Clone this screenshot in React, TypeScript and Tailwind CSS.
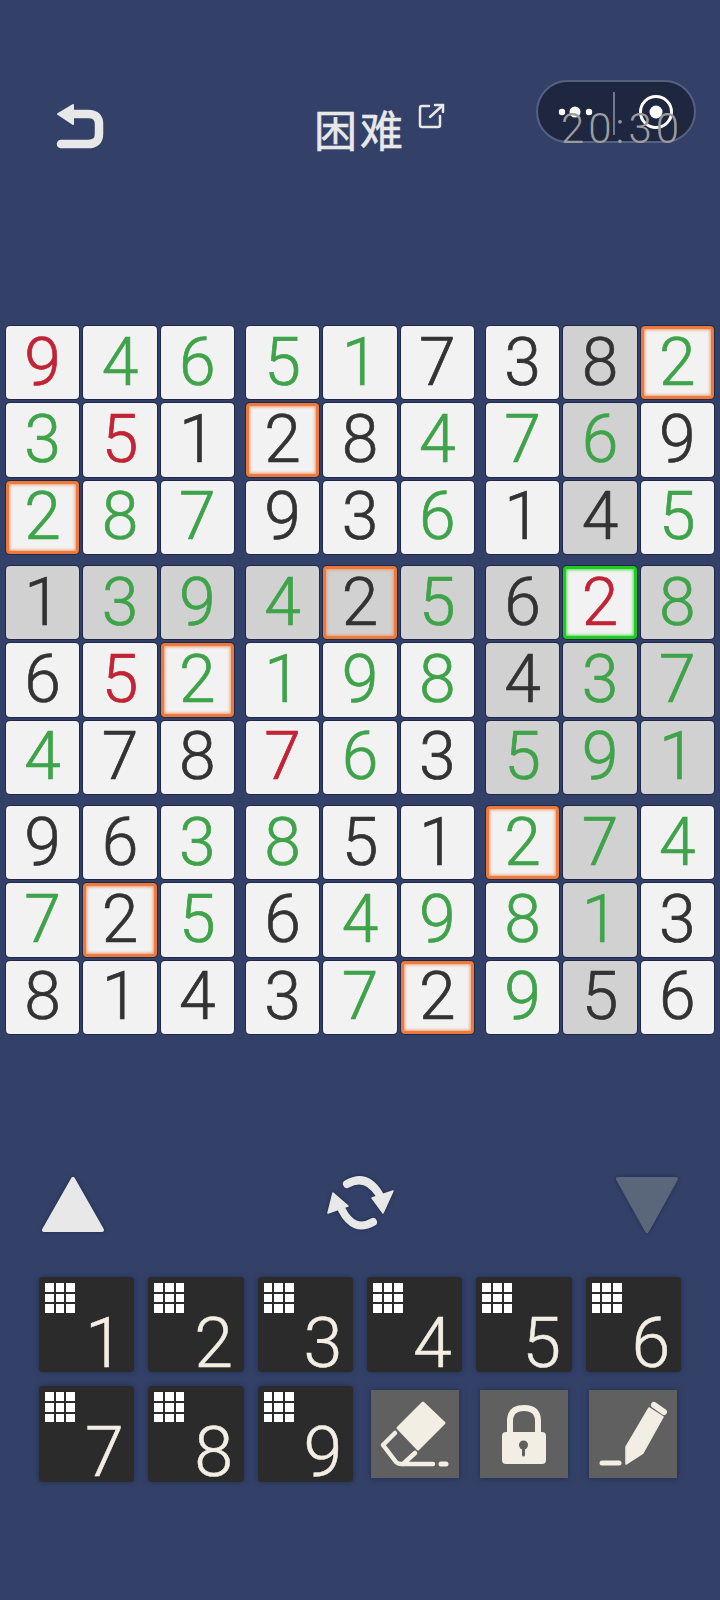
import clsx from 'clsx'

// each cell: digit + colour (g green, r red, k black), optional mark: * shaded, o orange ring, s selected
const board = [
  ['9r', '4g', '6g', '5g', '1g', '7k', '3k', '8k*', '2go'],
  ['3g', '5r', '1k', '2ko', '8k', '4g', '7g', '6g*', '9k'],
  ['2go', '8g', '7g', '9k', '3k', '6g', '1k', '4k*', '5g'],
  ['1k*', '3g*', '9g*', '4g*', '2k*o', '5g*', '6k*', '2rs', '8g*'],
  ['6k', '5r', '2go', '1g', '9g', '8g', '4k*', '3g*', '7g*'],
  ['4g', '7k', '8k', '7r', '6g', '3k', '5g*', '9g*', '1g*'],
  ['9k', '6k', '3g', '8g', '5k', '1k', '2go', '7g*', '4g'],
  ['7g', '2ko', '5g', '6k', '4g', '9g', '8g', '1g*', '3k'],
  ['8k', '1k', '4k', '3k', '7g', '2ko', '9g', '5k*', '6k'],
]

function Cell({ value }: { value: string }) {
  const tone = value[1]
  const shaded = value.includes('*')
  const orange = value.includes('o')
  const selected = value.includes('s')
  return (
    <div
      className={clsx(
        'flex h-[73.33px] items-center justify-center rounded-[4px] font-[Roboto,sans-serif] text-[66px] leading-none font-light [-webkit-text-stroke:0.7px_currentColor]',
        shaded ? 'bg-[#d1d1d1]' : 'bg-[#f2f2f2]',
        tone === 'g' && 'text-[#3fa34a]',
        tone === 'r' && 'text-[#c02436]',
        tone === 'k' && 'text-[#333333]',
        orange && 'border-[3px] border-[#ec7a3c] shadow-[0_0_0_1px_#1e2747,inset_0_0_3px_1px_#f2996a]',
        selected && 'border-[3px] border-[#1ecb1e] shadow-[0_0_0_1px_#1e2747,inset_0_0_3px_1px_#55dd55]',
        !orange && !selected && 'shadow-[0_0_0_1px_#1e2747]',
      )}
    >
      {value[0]}
    </div>
  )
}

function Board() {
  const boxes = [0, 3, 6].flatMap((r) => [0, 3, 6].map((c) => ({ r, c })))
  return (
    <div className="mx-[6px] mt-[172px] grid w-[708px] grid-cols-3 gap-[12px]">
      {boxes.map(({ r, c }) => (
        <div key={`${r}-${c}`} className="grid grid-cols-3 gap-[4px]">
          {board.slice(r, r + 3).flatMap((row, i) =>
            row.slice(c, c + 3).map((v, j) => <Cell key={`${i}-${j}`} value={v} />),
          )}
        </div>
      ))}
    </div>
  )
}

function Header() {
  return (
    <div className="relative">
      <div className="absolute top-[80px] left-[536px] h-[63px] w-[160px] rounded-full border-2 border-[#556080] bg-[#1f2740]" />
      <svg className="absolute top-[80px] left-[536px]" width="160" height="63" viewBox="0 0 160 63">
        <circle cx="26" cy="32" r="3.2" fill="#fff" />
        <circle cx="39" cy="32" r="5.5" fill="#fff" />
        <circle cx="53" cy="32" r="3.2" fill="#fff" />
        <path d="M78 12V55" stroke="#8f96a8" strokeWidth="1.5" />
        <circle cx="120" cy="32" r="15.5" fill="none" stroke="#fff" strokeWidth="3" />
        <circle cx="120" cy="32" r="6.5" fill="#fff" />
      </svg>
      <div className="relative flex items-start pt-[100px] pl-[50px]">
        <svg width="60" height="50" viewBox="0 0 60 50" className="shrink-0">
          <path d="M8 14 23 5V24Z" fill="#e8e8e8" stroke="#e8e8e8" strokeWidth="2" strokeLinejoin="round" />
          <path d="M23 14H38Q49 14 49 24V34Q49 44 38 44H11" fill="none" stroke="#e8e8e8" strokeWidth="8.5" strokeLinecap="round" />
        </svg>
        <div className="ml-[204px] flex items-start">
          <span className="mt-[3px] font-['Noto_Sans_CJK_SC',sans-serif] text-[43px] leading-[50px] font-normal tracking-[3px] whitespace-nowrap text-[#e8e8e8] [-webkit-text-stroke:0.5px_currentColor]">
            困难
          </span>
          <svg width="28" height="28" viewBox="0 0 28 28" className="mt-[2px] ml-[11px]">
            <path d="M12 4H5Q3 4 3 6V23Q3 25 5 25H21Q23 25 23 23V14" fill="none" stroke="#e8e8e8" strokeWidth="2.5" strokeLinecap="round" />
            <path d="M13 15 26 3M18 3H26V10" fill="none" stroke="#e8e8e8" strokeWidth="2.5" strokeLinecap="round" />
          </svg>
        </div>
        <span className="mt-[4px] ml-[116px] font-[Roboto,sans-serif] text-[42px] leading-[50px] font-light tracking-[4px] whitespace-nowrap text-[#9c9c9c]">
          20:30
        </span>
      </div>
    </div>
  )
}

function Controls() {
  return (
    <div className="mt-[131px] flex items-center justify-between px-[40px]">
      <svg width="66" height="60" viewBox="0 0 66 60" className="drop-shadow-[0_0_2px_#222b4a]">
        <path d="M4 55H62L33 4Z" fill="#e8e8e8" stroke="#e8e8e8" strokeWidth="4" strokeLinejoin="round" />
      </svg>
      <svg width="80" height="80" viewBox="0 0 80 80" className="drop-shadow-[0_0_2px_#222b4a]">
        <path d="M27 19Q46 8 59 29" fill="none" stroke="#e8e8e8" strokeWidth="8" strokeLinecap="round" />
        <path d="M52 33 73 26 63 48Z" fill="#e8e8e8" stroke="#e8e8e8" strokeWidth="1.5" strokeLinejoin="round" />
        <path d="M53 57Q34 68 22 45" fill="none" stroke="#e8e8e8" strokeWidth="8" strokeLinecap="round" />
        <path d="M28 41 8 48 13 28Z" fill="#e8e8e8" stroke="#e8e8e8" strokeWidth="1.5" strokeLinejoin="round" />
      </svg>
      <svg width="66" height="60" viewBox="0 0 66 60" className="drop-shadow-[0_0_2px_#222b4a]">
        <path d="M4 4H62L33 56Z" fill="#5a6679" stroke="#5a6679" strokeWidth="4" strokeLinejoin="round" />
      </svg>
    </div>
  )
}

function NumberPad({ n }: { n: number }) {
  return (
    <div className="flex h-[95.5px] flex-col rounded-[4px] bg-[#2b2b2b] pt-[6px] pl-[6px] shadow-[0_0_5px_#222b4a]">
      <div className="grid w-[30px] grid-cols-3 gap-[2px]">
        {Array.from({ length: 9 }, (_, i) => (
          <div key={i} className="h-[8.67px] bg-white" />
        ))}
      </div>
      <div className="mt-[-2px] mr-[10px] w-[40px] self-end text-center font-[Roboto,sans-serif] text-[70px] leading-[64px] font-light text-[#f3eee3] [-webkit-text-stroke:0.5px_currentColor]">
        {n}
      </div>
    </div>
  )
}

function ToolButton({ children }: { children: React.ReactNode }) {
  return (
    <div className="h-[88px] w-[88px] self-center justify-self-center bg-[#606060] shadow-[0_0_6px_#222b4a]">
      <svg width="88" height="88" viewBox="0 0 88 88">
        {children}
      </svg>
    </div>
  )
}

export default function App() {
  return (
    <div className="h-[1600px] w-[720px] overflow-hidden bg-[#334169]">
      <Header />
      <Board />
      <Controls />
      <div className="mx-[39px] mt-[32px] grid grid-cols-6 gap-[14px]">
        {[1, 2, 3, 4, 5, 6, 7, 8, 9].map((n) => (
          <NumberPad key={n} n={n} />
        ))}
        <ToolButton>
          <path d="M52 13 73 33 47 59 27 38Z" fill="#f3eee3" stroke="#f3eee3" strokeWidth="3" strokeLinejoin="round" />
          <path d="M24 43 12 55 25 72Q27 74 30 74H62M44 63 32 74" fill="none" stroke="#f3eee3" strokeWidth="4.5" strokeLinecap="round" strokeLinejoin="round" />
          <path d="M70 74H75" stroke="#f3eee3" strokeWidth="5" strokeLinecap="round" />
        </ToolButton>
        <ToolButton>
          <path d="M30 42V31Q30 18 44 18Q58 18 58 31V42" fill="none" stroke="#f3eee3" strokeWidth="6" />
          <rect x="22" y="42" width="44" height="32" rx="4" fill="#f3eee3" />
          <circle cx="43.5" cy="55" r="4.5" fill="#606060" />
          <path d="M43.5 55V65" stroke="#606060" strokeWidth="3" strokeLinecap="round" />
        </ToolButton>
        <ToolButton>
          <path d="M37 74V57L60 18 74 27 54 63Z" fill="#f3eee3" stroke="#f3eee3" strokeWidth="1.5" strokeLinejoin="round" />
          <path d="M65 15 75 22" stroke="#f3eee3" strokeWidth="6" strokeLinecap="round" />
          <path d="M13 73H30" stroke="#f3eee3" strokeWidth="5" strokeLinecap="round" />
        </ToolButton>
      </div>
    </div>
  )
}
